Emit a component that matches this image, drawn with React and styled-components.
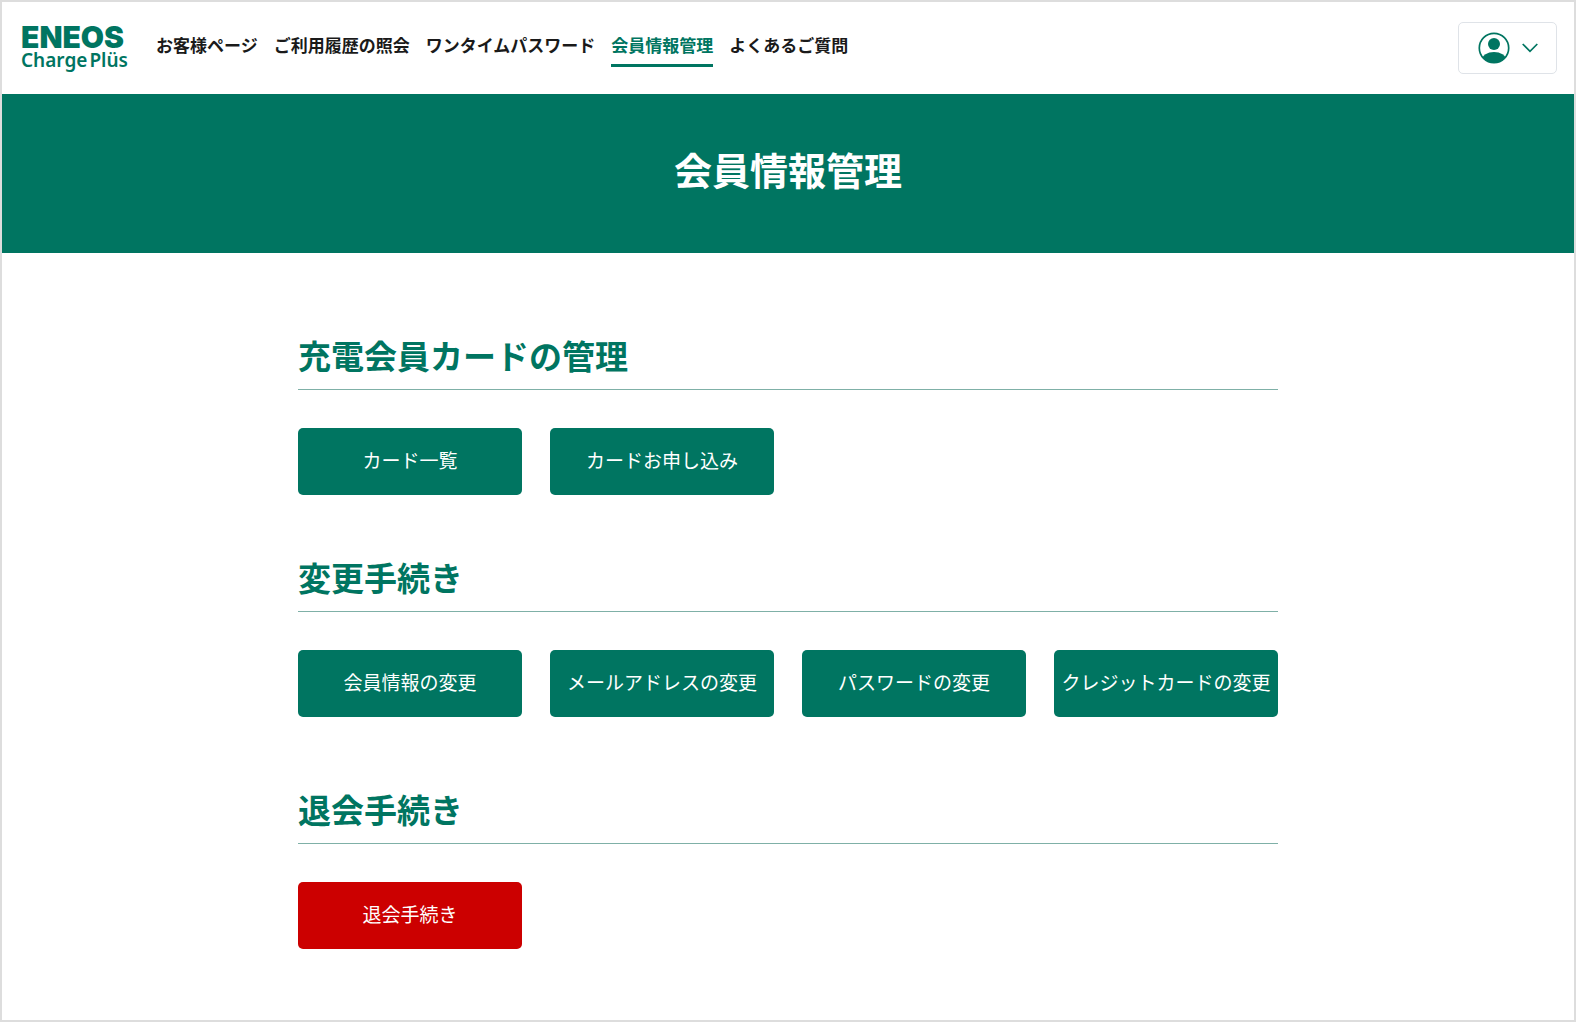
import React from 'react';
import styled, { createGlobalStyle } from 'styled-components';

const navItems = [
  { label: 'お客様ページ', href: '#customer' },
  { label: 'ご利用履歴の照会', href: '#history' },
  { label: 'ワンタイムパスワード', href: '#otp' },
  { label: '会員情報管理', href: '#member', active: true },
  { label: 'よくあるご質問', href: '#faq' },
];

const sections = [
  {
    title: '充電会員カードの管理',
    actions: ['カード一覧', 'カードお申し込み'],
  },
  {
    title: '変更手続き',
    actions: [
      '会員情報の変更',
      'メールアドレスの変更',
      'パスワードの変更',
      'クレジットカードの変更',
    ],
  },
  {
    title: '退会手続き',
    actions: ['退会手続き'],
    danger: true,
  },
];

const UserIcon = () => (
  <svg width="32" height="32" viewBox="0 0 32 32" aria-hidden="true">
    <defs>
      <clipPath id="user-clip">
        <circle cx="16" cy="16" r="15" />
      </clipPath>
    </defs>
    <circle cx="16" cy="12" r="6" fill="currentColor" />
    <ellipse
      cx="16"
      cy="28"
      rx="12"
      ry="8"
      fill="currentColor"
      clipPath="url(#user-clip)"
    />
    <circle
      cx="16"
      cy="16"
      r="14.7"
      fill="none"
      stroke="currentColor"
      strokeWidth="1.7"
    />
  </svg>
);

const ChevronIcon = () => (
  <svg width="16" height="10" viewBox="0 0 16 10" aria-hidden="true">
    <path
      d="M0.7 1 L8 8.3 L15.3 1"
      fill="none"
      stroke="currentColor"
      strokeWidth="1.7"
    />
  </svg>
);

const Header = () => (
  <HeaderWrapper>
    <Logo href="#top">
      <LogoName>ENEOS</LogoName>
      <LogoService>
        <span>Charge</span>
        <span>Plüs</span>
      </LogoService>
    </Logo>
    <Nav>
      {navItems.map(({ label, href, active }) => (
        <NavLink
          key={label}
          href={href}
          $active={active}
          aria-current={active ? 'page' : undefined}
        >
          {label}
        </NavLink>
      ))}
    </Nav>
    <AccountButton type="button" aria-label="アカウント">
      <UserIcon />
      <ChevronIcon />
    </AccountButton>
  </HeaderWrapper>
);

const App = () => {
  return (
    <>
      <GlobalStyle />
      <Page>
        <Header />
        <Hero>
          <h1>会員情報管理</h1>
        </Hero>
        <Main>
          {sections.map(({ title, actions, danger }) => (
            <Section key={title} $danger={danger}>
              <h2>{title}</h2>
              <ActionList>
                {actions.map((action) => (
                  <ActionButton key={action} type="button" $danger={danger}>
                    {action}
                  </ActionButton>
                ))}
              </ActionList>
            </Section>
          ))}
        </Main>
      </Page>
    </>
  );
};

const GlobalStyle = createGlobalStyle`
  * {
    box-sizing: border-box;
  }
  body {
    margin: 0;
    background-color: #fff;
    color: #1a1a1a;
    font-family: "Noto Sans CJK JP", sans-serif;
  }
  h1, h2 {
    margin: 0;
  }
  button {
    font-family: inherit;
    cursor: pointer;
  }
`;

const Page = styled.div`
  min-height: 100vh;
  border: 2px solid #ddd;
`;

const HeaderWrapper = styled.header`
  display: flex;
  align-items: center;
  min-height: 92px;
  padding: 0 17px 0 19px;
`;

const Logo = styled.a`
  display: flex;
  flex-direction: column;
  margin-right: 28px;
  color: #007561;
  text-decoration: none;
`;

const LogoName = styled.span`
  font-family: Inter, sans-serif;
  font-size: 30px;
  font-weight: 900;
  line-height: 24px;
`;

const LogoService = styled.span`
  display: flex;
  gap: 2px;
  font-family: "Noto Sans", sans-serif;
  font-size: 19px;
  font-weight: 600;
  line-height: 22px;
`;

const Nav = styled.nav`
  display: flex;
  gap: 16px;
  padding-bottom: 4px;
`;

const NavLink = styled.a`
  padding: 7px 0;
  border-bottom: 3px solid ${({ $active }) => ($active ? '#007561' : 'transparent')};
  color: ${({ $active }) => ($active ? '#007561' : '#1a1a1a')};
  font-size: 17px;
  font-weight: 700;
  line-height: 24px;
  text-decoration: none;
  white-space: nowrap;
`;

const AccountButton = styled.button`
  display: flex;
  align-items: center;
  justify-content: center;
  gap: 12px;
  width: 99px;
  height: 52px;
  margin-left: auto;
  padding: 0;
  border: 1px solid #dfe3e8;
  border-radius: 5px;
  background-color: #fff;
  color: #007561;
`;

const Hero = styled.div`
  display: flex;
  align-items: center;
  justify-content: center;
  min-height: 159px;
  padding-bottom: 10px;
  background-color: #007561;
  h1 {
    color: #fff;
    font-size: 38px;
    font-weight: 700;
    line-height: 56px;
  }
`;

const Main = styled.main`
  max-width: 980px;
  margin: 0 auto;
  padding: 20px 0 60px;
`;

const Section = styled.section`
  padding-top: ${({ $danger }) => ($danger ? '68px' : '58px')};
  h2 {
    padding-bottom: 10px;
    border-bottom: 1px solid #7fb0a7;
    color: #007561;
    font-size: 33px;
    font-weight: 700;
    line-height: 48px;
  }
`;

const ActionList = styled.div`
  display: grid;
  grid-template-columns: repeat(4, 1fr);
  gap: 28px;
  margin-top: 38px;
`;

const ActionButton = styled.button`
  min-height: 67px;
  padding: 0 0 3px;
  border: none;
  border-radius: 5px;
  background-color: ${({ $danger }) => ($danger ? '#cc0000' : '#007561')};
  color: #fff;
  font-size: 19px;
  line-height: 28px;
  white-space: nowrap;
`;

export default App;
